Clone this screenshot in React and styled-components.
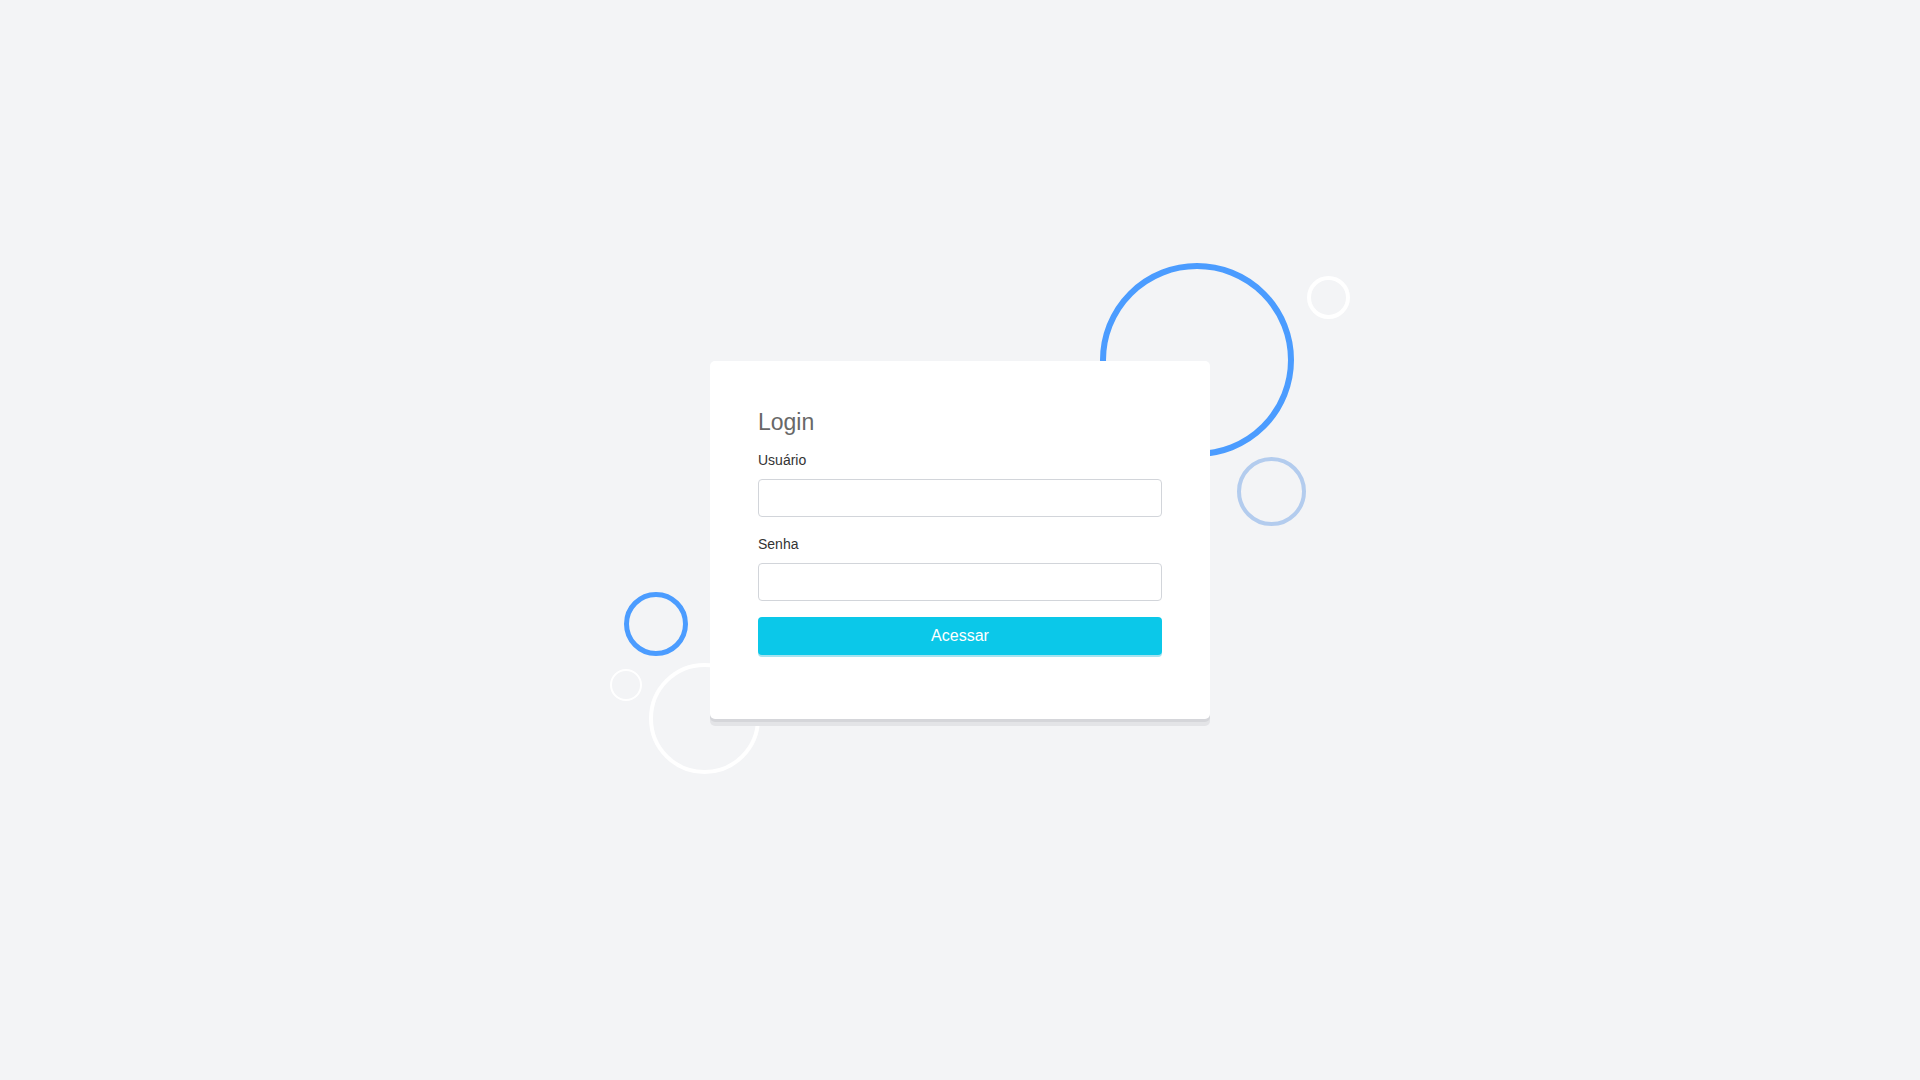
import React from "react";
import styled, { createGlobalStyle } from "styled-components";

const Global = createGlobalStyle`
  * { box-sizing: border-box; }
  html, body { margin: 0; padding: 0; background: #f3f4f6; }
  body { font-family: "Liberation Sans", Arial, sans-serif; }
`;

const Page = styled.div`
  min-height: 100vh;
  display: flex;
  align-items: center;
  justify-content: center;
  background: #f3f4f6;
  overflow: hidden;
`;

const Stage = styled.div`
  position: relative;
  width: 500px;
`;

const Ring = styled.div`
  position: absolute;
  left: ${(p) => p.$x}px;
  top: ${(p) => p.$y}px;
  width: ${(p) => p.$size}px;
  height: ${(p) => p.$size}px;
  border-radius: 50%;
  border: ${(p) => p.$stroke}px solid ${(p) => p.$color};
  z-index: 0;
`;

const Card = styled.form`
  position: relative;
  z-index: 1;
  background: #ffffff;
  border-radius: 5px;
  padding: 47px 48px 64px;
  box-shadow: 0 3px 0 #d5d6da, 0 7px 0 #e3e4e7;
  display: flex;
  flex-direction: column;
`;

const Title = styled.h1`
  margin: 0 0 14px;
  font-size: 23px;
  line-height: 28px;
  font-weight: 400;
  color: #686868;
`;

const Field = styled.div`
  display: flex;
  flex-direction: column;
  margin-bottom: ${(p) => p.$gap}px;
`;

const Label = styled.label`
  font-size: 14px;
  line-height: 20px;
  color: #333333;
  margin-bottom: ${(p) => p.$gap}px;
`;

const Input = styled.input`
  height: 38px;
  width: 100%;
  border: 1px solid #d2d5da;
  border-radius: 4px;
  background: #fff;
  padding: 0 10px;
  font-family: inherit;
  font-size: 14px;
  outline: none;
`;

const Button = styled.button`
  height: 38px;
  width: 100%;
  border: none;
  border-radius: 4px;
  background: #0bc8e9;
  color: #ffffff;
  font-family: inherit;
  font-size: 16px;
  box-shadow: 0 2px 0 #a6e3ef;
  cursor: pointer;
`;

export default function App() {
  return (
    <>
      <Global />
      <Page>
        <Stage>
          <Ring $x={390} $y={-98} $size={194} $stroke={6} $color="#4b9cff" />
          <Ring $x={597} $y={-85} $size={43} $stroke={4} $color="#ffffff" />
          <Ring $x={527} $y={96} $size={69} $stroke={4} $color="#b3ccee" />
          <Ring $x={-86} $y={231} $size={64} $stroke={5} $color="#4b9cff" />
          <Ring $x={-100} $y={308} $size={32} $stroke={2} $color="#ffffff" />
          <Ring $x={-61} $y={302} $size={111} $stroke={4} $color="#ffffff" />
          <Card onSubmit={(e) => e.preventDefault()}>
            <Title>Login</Title>
            <Field $gap={17}>
              <Label $gap={9} htmlFor="usuario">Usuário</Label>
              <Input id="usuario" type="text" />
            </Field>
            <Field $gap={16}>
              <Label $gap={9} htmlFor="senha">Senha</Label>
              <Input id="senha" type="password" />
            </Field>
            <Button type="submit">Acessar</Button>
          </Card>
        </Stage>
      </Page>
    </>
  );
}
